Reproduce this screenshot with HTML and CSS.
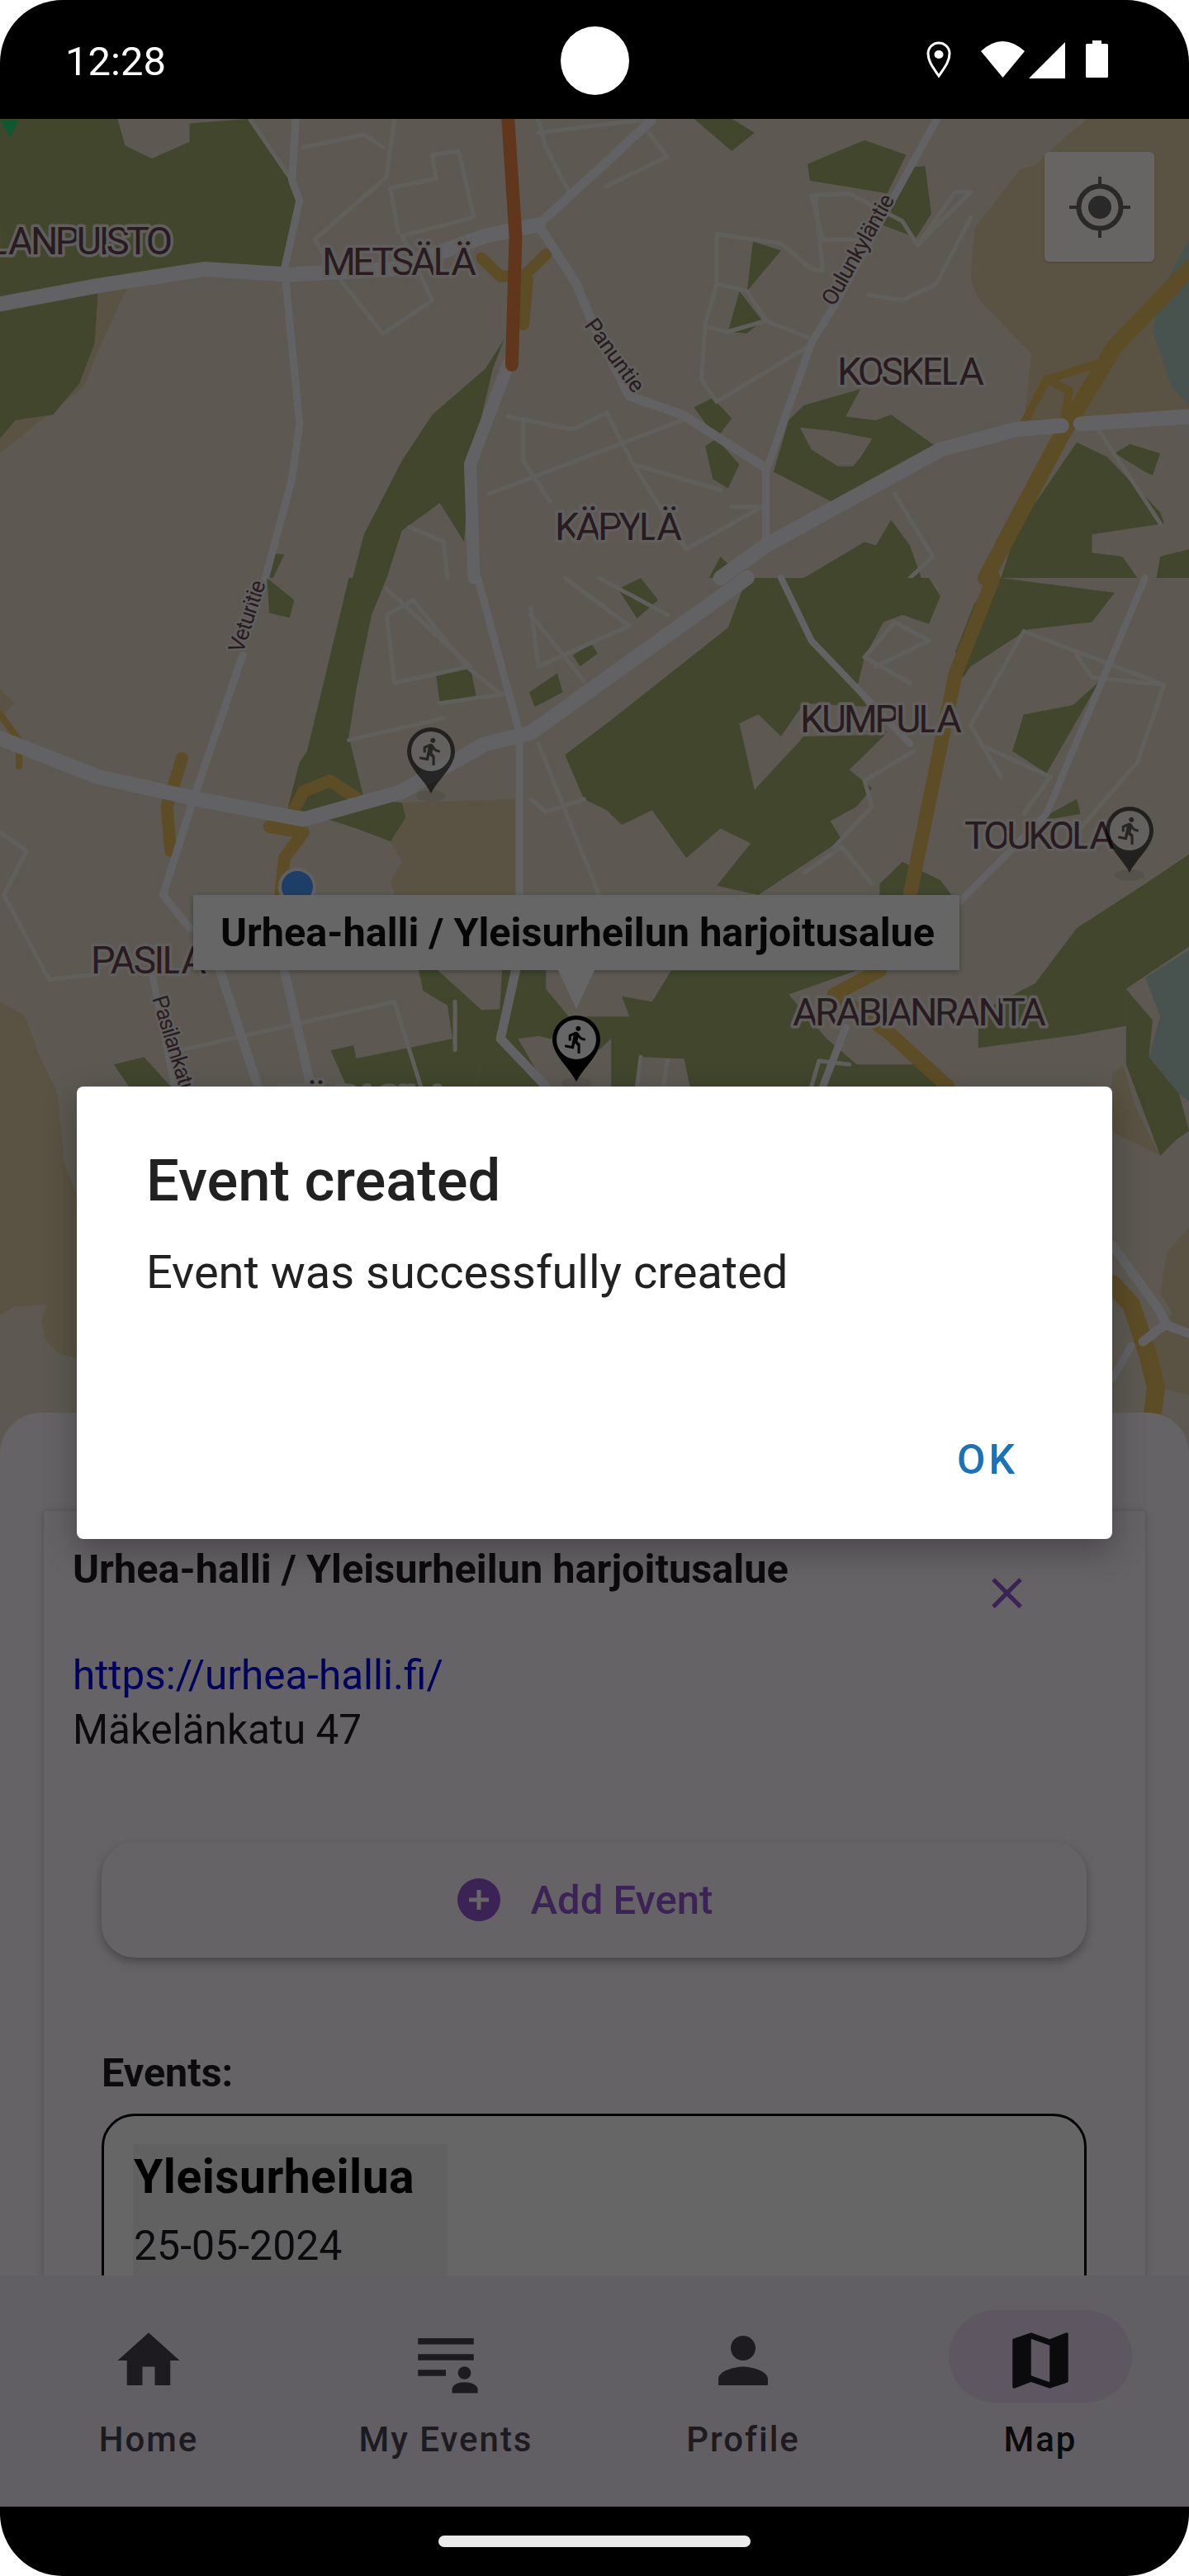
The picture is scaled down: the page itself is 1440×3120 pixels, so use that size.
FILE: index.html
```html
<!DOCTYPE html>
<html lang="en">
<head>
<meta charset="utf-8">
<title>Event created</title>
<link rel="stylesheet" href="styles.css">
</head>
<body>
<div class="phone">
  <header class="status">
    <span class="clock">12:28</span>
    <span class="camera"></span>
    <div class="status-icons">
      <svg class="ic-pin" viewBox="0 0 30 44"><path d="M15 42 C9 33 2 25 2 15 A13 13 0 0 1 28 15 C28 25 21 33 15 42Z" fill="none" stroke="#fff" stroke-width="3"/><ellipse cx="15" cy="16" rx="5.5" ry="5" fill="#fff"/></svg>
      <svg class="ic-wifi" viewBox="0 0 53 44"><path d="M0 12 Q26 -12 53 12 L26.5 44Z" fill="#fff"/></svg>
      <svg class="ic-signal" viewBox="0 0 44 44"><path d="M44 0V44H0Z" fill="#fff"/></svg>
      <svg class="ic-batt" viewBox="0 0 27 45"><path d="M8 0H19V4H25.500A1.500 1.500 0 0 1 27 5.500V43.500A1.500 1.500 0 0 1 25.500 45H1.500A1.500 1.500 0 0 1 0 43.500V5.500A1.500 1.500 0 0 1 1.500 4H8Z" fill="#fff"/></svg>
    </div>
  </header>

  <div class="screen">
    <main class="main">
      <section class="map">
        <svg class="map-svg" viewBox="0 144 1440 1700" preserveAspectRatio="none">
          <defs>
            <symbol id="pin" viewBox="0 0 58 80" overflow="visible">
              <path d="M29 80 C20 62 0 48 0 29 A29 29 0 0 1 58 29 C58 48 38 62 29 80Z" fill="#000"/>
              <circle cx="29" cy="29" r="24" fill="#fff"/>
              <g transform="translate(10.400 10.400) scale(1.550)"><path d="M13.490 5.480c1.100 0 2-.9 2-2s-.9-2-2-2-2 .9-2 2 .9 2 2 2zm-3.600 13.900l1-4.400 2.100 2v6h2v-7.500l-2.100-2 .6-3c1.300 1.500 3.300 2.500 5.500 2.500v-2c-1.900 0-3.500-1-4.300-2.400l-1-1.600c-.4-.6-1-1-1.700-1-.3 0-.5.100-.8.100l-5.200 2.200v4.700h2v-3.400l1.800-.7-1.600 8.100-4.900-1-.4 2 7 1.400z" fill="#111"/></g>
            </symbol>
          </defs>
          <rect class="beige" x="0" y="144" width="1440" height="1700"/>

          <!-- upper half of the map -->
          <g transform="scale(.9184 .4464)">
            <polygon class="tan" points="1434,322 1408,365 1365,448 1345,459 1285,620 1280,760 1290,810 1360,960 1350,1150 1568,1130 1568,322"/>
            <polygon class="tan" points="0,1190 20,1140 70,1125 105,1040 125,930 130,775 170,770 130,950 110,1050 0,1230"/>
            <polygon class="water" points="1568,650 1530,790 1520,900 1545,1050 1568,1100"/>
            <polygon class="green" points="155,322 165,395 200,430 250,385 250,335 330,322 385,490 395,545 375,730 270,725 130,770 125,930 105,1040 70,1125 20,1140 0,1190 0,322"/>
            <polygon class="green" points="915,322 965,410 995,360 965,322"/>
            <polygon class="green" points="1065,445 1140,380 1195,420 1170,525 1068,490"/>
            <polygon class="green" points="1175,530 1195,455 1220,450 1228,580 1208,645 1150,600"/>
            <polygon class="green" points="993,655 1030,680 985,790"/>
            <polygon class="green" points="975,790 1005,870 985,905 960,900"/>
            <polygon class="green" points="665,920 640,1000 570,1125 530,1250 480,1450 465,1568 510,1568 530,1440 580,1365 612,1470 620,1260 650,1000"/>
            <polygon class="green" points="915,1105 940,1080 965,1135 945,1190"/>
            <polygon class="green" points="930,1210 945,1190 975,1260 960,1325 940,1300"/>
            <polygon class="green" points="1040,1140 1060,1100 1135,1055 1115,1130 1155,1140 1175,1125 1240,1220 1105,1370 1020,1280"/>
            <polygon class="beige" points="1055,1160 1100,1170 1150,1190 1135,1240 1125,1265 1105,1265 1070,1220"/>
            <polygon class="green" points="1175,1410 1200,1480 1215,1568 1060,1568 1140,1470 1155,1480"/>
            <polygon class="green" points="950,1510 970,1550 955,1568 935,1568"/>
            <polygon class="green" points="355,1500 375,1505 360,1568 345,1568"/>
            <polygon class="green" points="1420,1200 1460,1240 1530,1390 1535,1420 1440,1450 1440,1500 1480,1510 1500,1568 1320,1568 1340,1440"/>
            <polygon class="green" points="1490,1205 1530,1230 1520,1290 1510,1280 1470,1230"/>
            <polygon class="green" points="1530,1510 1568,1490 1568,1568 1525,1568"/>

            <polyline class="minor" points="330,325 385,490"/>
            <polyline class="minor" points="400,400 480,365 505,400"/>
            <polyline class="minor" points="520,325 510,480 415,650 445,750 505,905 570,815 530,640 625,590 605,410 570,420 575,485 515,510 525,630"/>
            <polyline class="minor" points="710,325 720,400 750,520"/>
            <polyline class="minor" points="710,360 850,325"/>
            <polyline class="minor" points="800,505 880,425 855,360"/>
            <polyline class="minor" points="945,635 1030,660 1070,730 1085,735 1075,530 1120,525 1190,600 1210,665 1280,520 1260,520 1215,650"/>
            <polyline class="minor" points="1070,530 1085,650 1145,650"/>
            <polyline class="minor" points="945,635 945,770 930,880 925,1030 945,1090 1065,940"/>
            <polyline class="minor" points="945,770 985,790 1010,870 1065,915"/>
            <polyline class="minor" points="930,885 960,900 1010,870"/>
            <polyline class="minor" points="1145,800 1190,815 1235,770 1280,590"/>
            <polyline class="minor" points="670,1130 755,1165 800,1120 835,1260 950,1330"/>
            <polyline class="minor" points="690,1140 690,1250 725,1360"/>
            <polyline class="minor" points="645,1340 900,1140"/>
            <polyline class="minor" points="965,1375 1005,1375 905,1490 835,1260"/>
            <polyline class="minor" points="1180,1340 1230,1510 1200,1568"/>
            <polyline class="minor" points="1440,1140 1530,1420"/>
            <polyline class="minor" points="540,1430 585,1470 590,1568"/>

            <polyline class="hw" points="635,700 660,750 690,750 720,690"/>
            <polyline class="hw w10" points="695,760 690,880"/>
            <polyline class="hw w20" points="1568,730 1470,940 1400,1180 1300,1568"/>
            <polyline class="hw w8" points="1450,985 1380,1030 1350,1150"/>
            <polyline class="hw w8" points="1380,1030 1410,1060 1400,1180"/>

            <polyline class="road w16" points="0,825 130,775 270,730 380,745 520,730 640,640 710,610"/>
            <polyline class="road w8" points="390,325 385,490 395,545 375,730 380,830 395,1150 385,1300 350,1568"/>
            <polyline class="road w10" points="860,325 710,610 760,770 780,870 830,1075 900,1125 1010,1270"/>
            <polyline class="road w8" points="1235,325 1180,530 1100,830 1070,930 1010,1280 1010,1470"/>
            <polyline class="road w16" points="950,1568 1010,1480 1240,1220 1340,1165 1400,1155"/>
            <polyline class="road w16" points="1425,1150 1568,1130"/>
            <polyline class="road w14" points="670,990 620,1260 625,1568"/>
            <polyline class="traffic" points="670,325 680,640 675,990"/>
            <polygon class="marker" points="0,325 25,325 13,373"/>
          </g>

          <!-- lower half of the map -->
          <g transform="translate(0 700) scale(.9184 .4464)">
            <polygon class="tan" points="515,715 530,610 680,600 680,860 520,860 515,820 530,770"/>
            <polygon class="tan" points="1500,860 1568,760 1568,860"/>
            <polygon class="tan" points="0,300 20,340 0,380"/>
            <polygon class="water" points="1568,1010 1510,1085 1530,1190 1515,1300 1555,1400 1568,1420"/>
            <polygon class="green" points="460,0 405,470 395,500 380,620 470,680 515,715 535,650 530,610 480,600 460,430 470,300 490,100 510,0"/>
            <polygon class="green" points="575,265 620,240 628,320 580,340"/>
            <polygon class="green" points="698,310 735,258 742,310 705,350"/>
            <polygon class="green" points="755,210 780,178 788,205 765,240"/>
            <polygon class="green" points="815,30 845,0 868,60 840,110"/>
            <polygon class="green" points="352,0 388,60 382,108 355,95"/>
            <polygon class="green" points="745,480 800,395 960,135 985,0 1030,0 1070,170 1130,310 1170,420 1120,520 1150,570 1130,620 1095,660 1110,710 1000,860 945,835 990,720 950,680 905,760 860,630 820,670 800,630 770,600"/>
            <polygon class="beige" points="975,395 1000,370 1030,430 1060,340 1150,350 1170,425 1060,430 995,575"/>
            <polygon class="green" points="1030,0 1225,0 1240,50 1225,125 1190,100 1165,120 1140,215 1130,300 1070,170"/>
            <polygon class="green" points="1320,0 1470,40 1440,120 1355,140 1280,240 1270,270 1260,200 1285,70"/>
            <polygon class="green" points="1350,370 1415,345 1450,280 1380,530 1335,470"/>
            <polygon class="green" points="1375,650 1420,600 1425,640 1370,660"/>
            <polygon class="green" points="1160,830 1190,770 1240,820 1255,860 1160,860"/>
            <polygon class="green" points="1568,750 1510,830 1420,950 1365,1100 1290,1180 1290,1275 1420,1240 1485,1215 1485,1115 1568,1000"/>
            <polygon class="green" points="1485,1115 1520,1200 1515,1300 1555,1400 1568,1500 1552,1523 1530,1568 1485,1320"/>
            <polygon class="green" points="700,1065 750,1190 830,1190 820,1135 860,1150 885,1065 1130,1065 1040,1130 1090,1250 1130,1320 1215,1320 1260,1380 710,1380 700,1200"/>
            <polygon class="green" points="552,1064 558,1120 590,1160 597,1254 634,1322 626,1380 720,1380 720,1064"/>
            <polygon class="beige" points="577,1064 635,1172 659,1170 662,1064"/>
            <polygon class="beige" points="683,1250 711,1243 790,1280 806,1250 806,1380 720,1380"/>
            <polygon class="beige" points="840,1380 848,1300 902,1305 910,1380"/>
            <polygon class="green" points="150,1320 190,1300 225,1380 170,1380"/>
            <polygon class="green" points="436,1282 466,1268 470,1304 597,1250 634,1322 626,1380 457,1380"/>
            <polygon class="tan" points="0,1150 40,1250 75,1390 0,1395"/>

            <polyline class="minor" points="510,30 620,240 520,285 510,100 545,60 615,240 660,315"/>
            <polyline class="minor" points="580,340 665,315"/>
            <polyline class="minor" points="460,440 585,380"/>
            <polyline class="minor" points="745,0 830,130 710,240 700,80"/>
            <polyline class="minor" points="790,0 880,100"/>
            <polyline class="minor" points="700,100 770,280"/>
            <polyline class="minor" points="1155,240 1225,170 1180,120 1140,215 1200,285"/>
            <polyline class="minor" points="1350,145 1535,290 1500,500 1420,690"/>
            <polyline class="minor" points="1350,145 1280,400 1320,540"/>
            <polyline class="minor" points="1300,460 1385,540 1350,640"/>
            <polyline class="minor" points="1420,210 1440,270 1535,290"/>
            <polyline class="minor" points="1060,800 1110,730 1150,830"/>
            <polyline class="minor" points="1205,470 1140,550 1150,620 1100,730"/>
            <polyline class="minor" points="700,600 720,635 770,600"/>
            <polyline class="minor" points="710,450 790,860"/>
            <polyline class="minor" points="0,690 35,740 5,860 65,1090 125,1075"/>
            <polyline class="minor" points="240,1280 520,1150 555,1380"/>
            <polyline class="minor" points="600,1280 600,1150"/>
            <polyline class="minor" points="1070,1380 1080,1310 1120,1320"/>
            <polyline class="minor" points="845,1300 840,1380"/>
            <polyline class="minor" points="880,1310 875,1380"/>

            <polyline class="hw w12" points="1310,0 1260,260 1200,860"/>
            <polyline class="hw w12" points="1160,1065 1100,1130 1170,1230 1250,1380"/>
            <polyline class="hw w6" points="0,370 25,440 25,510"/>
            <polyline class="hw w10" points="240,490 220,620 225,740"/>
            <polyline class="hw w10" points="385,640 400,580 435,550 475,605"/>
            <polyline class="hw w10" points="355,675 400,690 375,760 370,860"/>

            <polyline class="road w8" points="630,0 685,420 685,860"/>
            <polyline class="road w16" points="985,0 700,420 640,450 530,580 400,655 260,600 130,540 0,435"/>
            <polyline class="road w8" points="320,210 255,600 215,860 250,950"/>
            <polyline class="road w7" points="1510,0 1380,640 1265,880"/>
            <polyline class="road w7" points="1030,0 1070,170 1200,450"/>
            <polyline class="road w10" points="375,1065 410,1380"/>
            <polyline class="road w10" points="290,1065 340,1380"/>
            <polyline class="road w7" points="200,1065 230,1380"/>
            <polyline class="road w10" points="680,1065 660,1250 720,1380"/>
            <polyline class="road w8" points="1115,1220 1085,1380"/>
          </g>

          <!-- lowest strip, beside the dialog -->
          <polygon class="tan" points="0,1213 30,1230 52,1290 70,1327 78,1410 93,1447 93,1645 72,1640 55,1623 50,1600 57,1580 17,1583 0,1593"/>
          <polygon class="tan" points="1347,1300 1360,1290 1375,1340 1405,1400 1345,1370"/>
          <polygon class="tan" points="1440,1487 1413,1517 1405,1567 1420,1590 1393,1630 1400,1680 1440,1690"/>
          <polyline class="hw plain w22" points="1347,1555 1370,1580 1380,1610 1390,1640 1400,1680 1395,1720"/>
          <polyline class="road plain w10" points="1347,1508 1403,1585 1413,1605 1440,1615"/>
          <polyline class="road plain w10" points="1413,1603 1384,1625"/>
          <polyline class="road plain w8" points="1370,1630 1347,1670"/>

          <text class="place" x="-12" y="308" textLength="221">LANPUISTO</text>
          <text class="place" x="390" y="333" textLength="187">METSÄLÄ</text>
          <text class="place" x="1014" y="466" textLength="178">KOSKELA</text>
          <text class="place" x="672" y="654" textLength="154">KÄPYLÄ</text>
          <text class="place" x="969" y="887" textLength="196">KUMPULA</text>
          <text class="place" x="1168" y="1028" textLength="182">TOUKOLA</text>
          <text class="place" x="110" y="1179" textLength="140">PASILA</text>
          <text class="place" x="960" y="1242" textLength="307">ARABIANRANTA</text>
          <text class="place" x="335" y="1349" textLength="210">ITÄ-PASILA</text>
          <text class="street" transform="translate(707 394) rotate(54)" textLength="103">Panuntie</text>
          <text class="street" transform="translate(1010 372) rotate(-60.500)" textLength="150">Oulunkyläntie</text>
          <text class="street" transform="translate(294 792) rotate(-72)" textLength="90">Veturitie</text>
          <text class="street" transform="translate(184 1209) rotate(73)" textLength="125">Pasilankatu</text>

          <circle class="dot" cx="360" cy="1074" r="21"/>
          <ellipse class="pin-shadow" cx="522" cy="964" rx="18" ry="7"/>
          <ellipse class="pin-shadow" cx="1368" cy="1060" rx="18" ry="7"/>
          <ellipse class="pin-shadow" cx="698" cy="1312" rx="18" ry="7"/>
          <use class="pin-faded" href="#pin" x="493" y="881" width="58" height="80"/>
          <use class="pin-faded" href="#pin" x="1339" y="977" width="58" height="80"/>
          <use href="#pin" x="669" y="1230" width="58" height="80"/>
        </svg>

        <button class="locate" type="button" aria-label="My location">
          <svg viewBox="0 0 74 74"><circle cx="37" cy="37" r="25.500" fill="none" stroke="#666" stroke-width="6"/><circle cx="37" cy="37" r="14" fill="#666"/><path d="M37 0V12M37 62V74M0 37H12M62 37H74" stroke="#666" stroke-width="4" fill="none"/></svg>
        </button>

        <div class="infowindow">Urhea-halli / Yleisurheilun harjoitusalue</div>
      </section>

      <section class="sheet">
        <article class="card">
          <div class="card-head">
            <h2 class="card-title">Urhea-halli / Yleisurheilun harjoitusalue</h2>
            <svg class="close" viewBox="0 0 24 24"><path d="M19 6.410L17.590 5 12 10.590 6.410 5 5 6.410 10.590 12 5 17.590 6.410 19 12 13.410 17.590 19 19 17.590 13.410 12z"/></svg>
          </div>
          <a class="link" href="#">https://urhea-halli.fi/</a>
          <p class="address">Mäkelänkatu 47</p>
          <div class="card-body">
            <button class="add" type="button">
              <svg class="add-icon" viewBox="0 0 52 52"><circle cx="26" cy="26" r="26"/><path d="M26 14V38M14 26H38" stroke="#fff" stroke-width="5"/></svg>
              <span>Add Event</span>
            </button>
            <h3 class="events-label">Events:</h3>
            <div class="events-box">
              <div class="event">
                <div class="event-name">Yleisurheilua</div>
                <div class="event-date">25-05-2024</div>
              </div>
            </div>
          </div>
        </article>
      </section>
    </main>

    <nav class="nav">
      <a class="tab">
        <span class="pill"><svg class="tab-icon" viewBox="0 0 24 24"><path d="M10 20v-6h4v6h5v-8h3L12 3 2 12h3v8z"/></svg></span>
        <span class="tab-label">Home</span>
      </a>
      <a class="tab">
        <span class="pill"><svg class="tab-icon" viewBox="0 0 24 24"><path d="M3 4.800H21V6.800H3ZM3 9.900H21V11.900H3ZM3 15H12V17H3Z"/><ellipse cx="18" cy="16" rx="2.100" ry="2.100"/><path d="M14 22.500V21.300C14 19.800 16 19 18 19S22.300 19.800 22.300 21.300V22.500Z"/></svg></span>
        <span class="tab-label">My Events</span>
      </a>
      <a class="tab">
        <span class="pill"><svg class="tab-icon" viewBox="0 0 24 24"><path d="M12 12c2.210 0 4-1.790 4-4s-1.790-4-4-4-4 1.790-4 4 1.790 4 4 4zm0 2c-2.670 0-8 1.340-8 4v2h16v-2c0-2.660-5.330-4-8-4z"/></svg></span>
        <span class="tab-label">Profile</span>
      </a>
      <a class="tab is-active">
        <span class="pill"><svg class="tab-icon" viewBox="0 0 24 24"><path d="M20.500 3l-.16.030L15 5.100 9 3 3.360 4.900c-.21.070-.36.250-.36.480V20.500c0 .280.220.500.500.500l.16-.03L9 18.900l6 2.100 5.640-1.900c.21-.07.360-.25.360-.48V3.500c0-.28-.22-.5-.5-.5zM15 19l-6-2.110V5l6 2.110V19z"/></svg></span>
        <span class="tab-label">Map</span>
      </a>
    </nav>

    <div class="scrim"></div>

    <div class="dialog" role="dialog">
      <h1 class="dialog-title">Event created</h1>
      <p class="dialog-text">Event was successfully created</p>
      <div class="dialog-actions"><button class="dialog-ok" type="button">OK</button></div>
    </div>
  </div>

  <footer class="gesture"><span class="gesture-bar"></span></footer>
</div>
</body>
</html>
```

FILE: styles.css
```css
* { box-sizing: border-box; }
html, body { margin: 0; padding: 0; background: #fff; }
body { width: 1440px; height: 3120px; overflow: hidden; font-family: Roboto, "Noto Sans", sans-serif; }
h1, h2, h3, p { margin: 0; }
button { font-family: inherit; border: 0; padding: 0; }

.phone { width: 1440px; height: 3120px; background: #000; border-radius: 76px; overflow: hidden; display: flex; flex-direction: column; }

.status { height: 144px; flex: none; display: flex; align-items: flex-start; justify-content: space-between; position: relative; padding: 0 98px 0 79px; color: #fff; }
.clock { font-size: 49px; line-height: 56px; margin-top: 47px; }
.camera { position: absolute; left: 679px; top: 32px; width: 83px; height: 83px; border-radius: 50%; background: #fff; }
.status-icons { display: flex; align-items: flex-start; margin-top: 49px; }
.status-icons svg { display: block; flex: none; }
.ic-pin { width: 30px; height: 44px; margin-top: 1px; }
.ic-wifi { width: 53px; height: 44px; margin: 1px 0 0 36px; }
.ic-signal { width: 44px; height: 44px; margin: 2px 0 0 5px; }
.ic-batt { width: 27px; height: 45px; margin-left: 25px; }

.screen { flex: none; height: 2892px; position: relative; display: flex; flex-direction: column; }
.main { flex: none; height: 2612px; position: relative; overflow: hidden; }

.map { position: absolute; left: 0; top: 0; width: 1440px; height: 1700px; overflow: hidden; }
.map-svg { display: block; width: 1440px; height: 1700px; }
.map-svg polygon, .map-svg polyline { stroke-linejoin: round; }
.beige { fill: #e8dfce; }
.tan { fill: #e2d0a8; }
.green { fill: #a2b070; }
.water { fill: #b5cec4; }
.marker { fill: #22e078; }
.pin-shadow { fill: #000; opacity: .08; }
.minor, .road, .hw, .traffic { fill: none; vector-effect: non-scaling-stroke; stroke-linecap: round; }
.minor { stroke: #f2eee6; stroke-width: 5px; }
.road { stroke: #f6f6fa; stroke-width: 10px; }
.hw { stroke: #e6c060; stroke-width: 14px; }
.traffic { stroke: #f08a4a; stroke-width: 16px; }
.w6 { stroke-width: 6px; }
.w7 { stroke-width: 8px; }
.w8 { stroke-width: 9px; }
.w10 { stroke-width: 11px; }
.w12 { stroke-width: 12px; }
.w14 { stroke-width: 15px; }
.w16 { stroke-width: 18px; }
.w20 { stroke-width: 20px; }
.w22 { stroke-width: 22px; }
.hw.w8 { stroke-width: 10px; }
.hw.w10 { stroke-width: 15px; }
.hw.w12 { stroke-width: 17px; }
.hw.w6 { stroke-width: 8px; }
.plain { vector-effect: none; }
.place, .street { fill: #644850; stroke: #f0eee8; paint-order: stroke; stroke-linejoin: round; font-family: Roboto, sans-serif; }
.place { font-size: 47px; stroke-width: 7px; }
.street { font-size: 27px; stroke-width: 5px; }
.dot { fill: #4a9cff; stroke: #f0f0f0; stroke-width: 4px; }
.pin-faded { opacity: .62; }

.locate { position: absolute; left: 1265px; top: 40px; width: 133px; height: 133px; border-radius: 6px; background: rgba(255,255,255,.94); box-shadow: 0 1px 3px rgba(0,0,0,.2); display: flex; align-items: center; justify-content: center; }
.locate svg { width: 74px; height: 74px; display: block; }

.infowindow { position: absolute; left: 234px; top: 940px; width: 928px; height: 91px; background: #fff; box-shadow: 0 2px 7px rgba(0,0,0,.3); font-size: 48.600px; font-weight: 700; line-height: 91px; color: #111; padding-left: 33px; white-space: nowrap; }
.infowindow::after { content: ""; position: absolute; left: 442px; top: 91px; border-style: solid; border-width: 47px 22px 0; border-color: #fff transparent transparent; }

.sheet { position: absolute; left: 0; right: 0; top: 1567px; bottom: 0; background: #fef7ff; border-radius: 50px 50px 0 0; padding: 119px 53px 0; overflow: hidden; }
.card { background: #fef7ff; box-shadow: 0 1px 8px rgba(0,0,0,.22); padding: 41px 36px 0 35px; height: 1000px; border-radius: 4px; }
.card-head { display: flex; justify-content: space-between; align-items: flex-start; margin-bottom: 35px; }
.card-title { font-size: 48.700px; font-weight: 700; line-height: 59px; color: #1d1b20; white-space: nowrap; }
.close { width: 63px; height: 63px; margin: 27px 100px 0 0; fill: #9559d8; display: block; flex: none; }
.link, .address { display: block; font-size: 49.400px; line-height: 66px; }
.link { color: #0000ee; text-decoration: none; }
.address { color: #1d1b20; }
.card-body { margin: 103px 0 0 35px; width: 1193px; }
.add { width: 1193px; height: 140px; border-radius: 40px; background: #fef7ff; box-shadow: 0 5px 12px rgba(0,0,0,.3); display: flex; align-items: center; justify-content: center; gap: 37px; padding-right: 22px; color: #9559d8; font-size: 49px; font-weight: 500; }
.add-icon { width: 52px; height: 52px; fill: #9559d8; display: block; }
.events-label { font-size: 48.500px; font-weight: 700; line-height: 54px; margin-top: 113px; color: #1d1b20; }
.events-box { margin-top: 22px; height: 400px; border: 3px solid #000; border-radius: 40px; background: #fff; padding: 34px 0 0 35px; }
.event { width: 381px; background: #f6f2f6; padding: 7px 0 0 1px; height: 300px; }
.event-name { font-size: 57px; font-weight: 700; letter-spacing: .5px; line-height: 66px; color: #000; }
.event-date { font-size: 50px; line-height: 59px; margin-top: 21px; color: #1d1b20; }

.nav { position: absolute; left: 0; right: 0; top: 2612px; height: 280px; background: #f3edf7; display: grid; grid-template-columns: repeat(4, 1fr); padding-top: 42px; }
.tab { display: flex; flex-direction: column; align-items: center; color: #49454f; }
.pill { width: 222px; height: 112px; border-radius: 56px; padding-top: 16px; display: flex; justify-content: center; }
.tab-icon { width: 90px; height: 90px; fill: #49454f; display: block; }
.tab-label { font-size: 42px; font-weight: 500; letter-spacing: 2px; line-height: 50px; margin-top: 20px; }
.is-active .pill { background: #ebd9f5; }
.is-active .tab-icon { fill: #1d1b20; }
.is-active .tab-label { color: #1d1b20; }

.scrim { position: absolute; inset: 0; background: rgba(0,0,0,.6); }

.dialog { position: absolute; left: 93px; top: 1172px; width: 1254px; height: 548px; background: #fff; border-radius: 8px; box-shadow: 0 14px 40px rgba(0,0,0,.3); padding: 72px 84px 0; color: #212121; display: flex; flex-direction: column; }
.dialog-title { font-size: 70.500px; font-weight: 500; line-height: 84px; }
.dialog-text { font-size: 56px; line-height: 66px; margin-top: 36px; }
.dialog-actions { margin-top: auto; display: flex; justify-content: flex-end; padding: 0 30px 66px 0; }
.dialog-ok { background: none; color: #1a73b8; font-size: 50px; font-weight: 500; letter-spacing: 4px; line-height: 60px; }

.gesture { flex: 1; display: flex; justify-content: center; padding-top: 35px; }
.gesture-bar { width: 378px; height: 14px; border-radius: 7px; background: #ebebeb; }
```
